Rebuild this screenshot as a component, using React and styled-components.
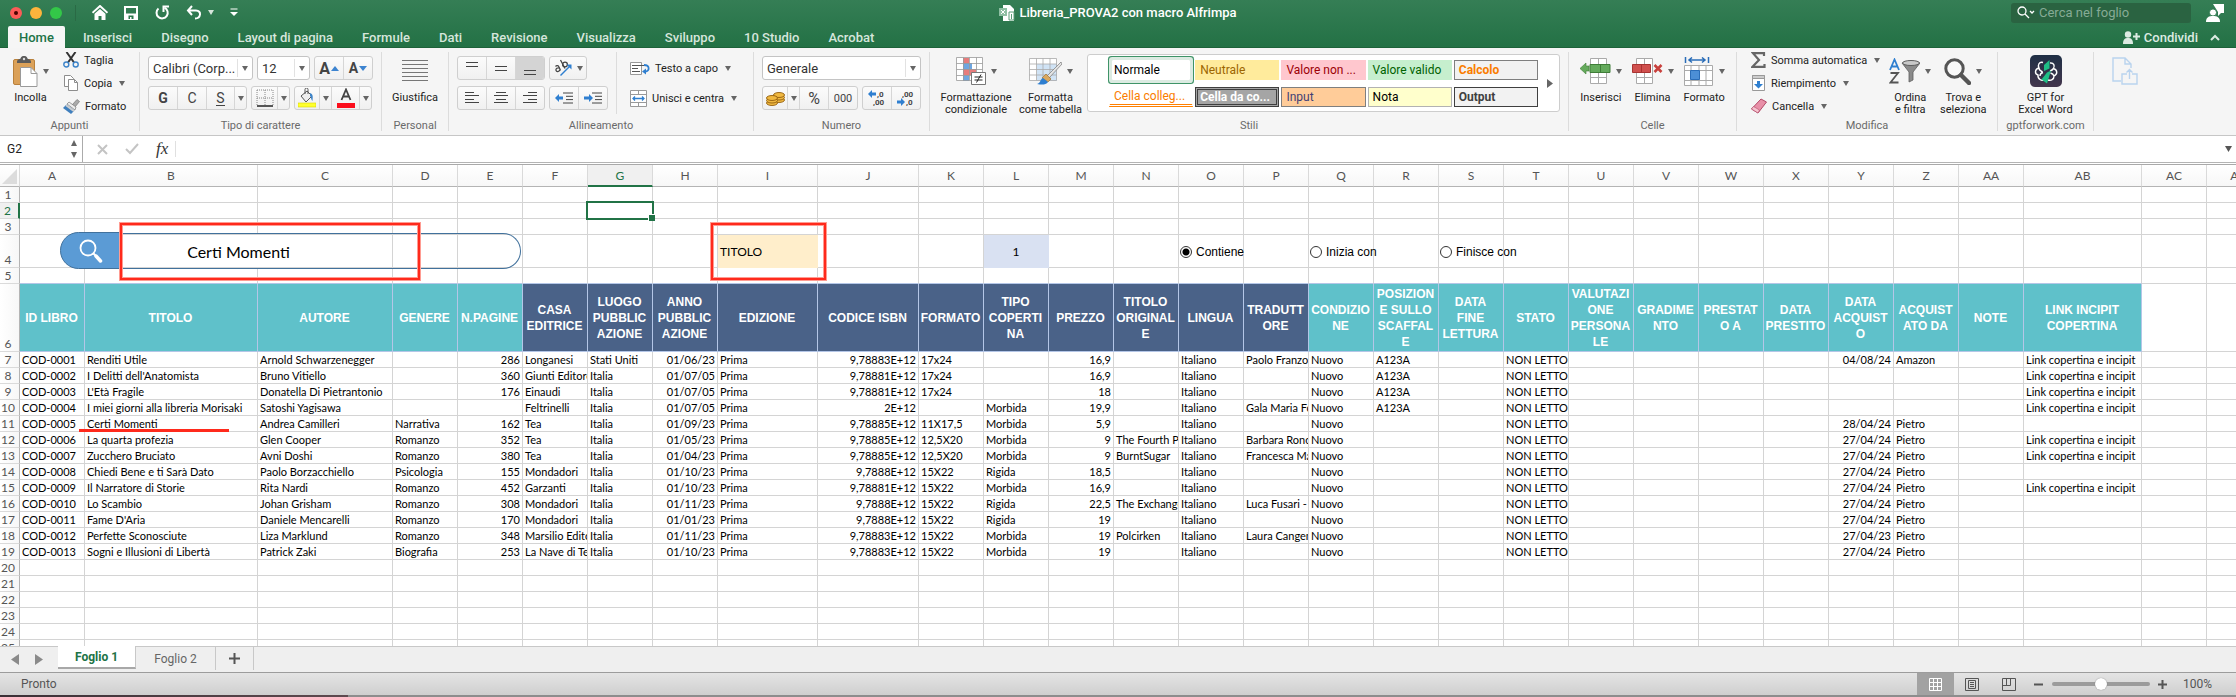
import React from "react";
import styled, { createGlobalStyle, css } from "styled-components";

const GlobalStyle = createGlobalStyle`
  * { box-sizing: border-box; }
  html, body, #root { height: 100%; }
  body { margin: 0; overflow: hidden; font-family: Roboto, "Liberation Sans", sans-serif; font-size: 11px; color: #222; }
  button, input, select { font: inherit; color: inherit; }
  button { border: 0; background: none; padding: 0; margin: 0; }
  svg { display: block; flex: none; }
`;

/* ---------- frame ---------- */
const Window = styled.div`
  height: 100vh;
  display: flex;
  flex-direction: column;
  background: #fff;
`;
const Header = styled.header`
  flex: none;
  height: 48px;
  background: linear-gradient(#357e55, #237145);
  border-bottom: 1px solid #1d6239;
`;
const TitleBar = styled.div`
  height: 25px;
  display: grid;
  grid-template-columns: 1fr auto 1fr;
  align-items: center;
`;
const QuickBar = styled.div`
  display: flex;
  align-items: center;
  padding-left: 10px;
  color: #fff;
`;
const Light = styled.button`
  width: 12px;
  height: 12px;
  margin-right: 8px;
  border-radius: 50%;
  background: ${(p) => p.$color};
  display: grid;
  place-items: center;
  &::after {
    content: "";
    width: 4px;
    height: 4px;
    border-radius: 50%;
    background: ${(p) => (p.$dot ? "#4d0000" : "transparent")};
  }
`;
const LightDivider = styled.span`
  width: 1px;
  height: 16px;
  margin: 0 16px 0 5px;
  background: #2a6a45;
`;
const QuickButton = styled.button`
  display: flex;
  align-items: center;
  gap: 6px;
  margin-right: 16px;
`;
const DocTitle = styled.h1`
  display: flex;
  align-items: center;
  gap: 3px;
  margin: 0;
  color: #fff;
  font-size: 13px;
  font-weight: 500;
`;
const TitleRight = styled.div`
  display: flex;
  justify-content: flex-end;
  align-items: center;
  gap: 15px;
  padding-right: 12px;
`;
const SearchField = styled.label`
  display: flex;
  align-items: center;
  gap: 4px;
  width: 180px;
  height: 20px;
  padding-left: 6px;
  border-radius: 3px;
  background: #2a6341;
  input {
    width: 140px;
    padding: 0;
    border: 0;
    outline: 0;
    background: none;
    color: #fff;
    font-size: 13px;
  }
  input::placeholder { color: #86ab95; opacity: 1; }
`;
const TabBar = styled.nav`
  display: flex;
  height: 22px;
  margin-top: 1px;
  padding-left: 8px;
  gap: 7px;
`;
const Tab = styled.button`
  height: 22px;
  padding: 0 11px;
  border-radius: 2px 2px 0 0;
  font-size: 13px;
  font-weight: 500;
  color: ${(p) => (p.$active ? "#217346" : "#d6e6dc")};
  background: ${(p) => (p.$active ? "#f6f6f6" : "transparent")};
`;
const Share = styled.div`
  margin-left: auto;
  display: flex;
  align-items: center;
  gap: 12px;
  padding-right: 16px;
`;
const ShareButton = styled.button`
  display: flex;
  align-items: center;
  gap: 4px;
  color: #dcebe2;
  font-size: 13px;
  font-weight: 500;
`;

/* ---------- ribbon ---------- */
const Ribbon = styled.section`
  flex: none;
  display: flex;
  height: 88px;
  padding: 4px 0;
  background: #f5f5f5;
  border-bottom: 1px solid #c6c6c6;
`;
const Group = styled.div`
  flex: ${(p) => (p.$grow ? "1 0 auto" : "none")};
  width: ${(p) => (p.$w ? p.$w + "px" : "auto")};
  display: flex;
  flex-direction: column;
  border-right: ${(p) => (p.$last ? 0 : 1)}px solid #dcdcdc;
`;
const GroupBody = styled.div`
  flex: 1;
  display: flex;
  align-items: flex-start;
  gap: ${(p) => p.$gap || 0}px;
  padding: 0 8px 0 ${(p) => p.$left ?? 8}px;
`;
const GroupLabel = styled.div`
  height: 13px;
  line-height: 15px;
  text-align: center;
  color: #6a6a6a;
`;
const Large = styled.button`
  width: ${(p) => p.$w}px;
  padding-top: 3px;
  display: flex;
  flex-direction: column;
  align-items: center;
  gap: 5px;
  line-height: 12px;
  white-space: pre;
`;
const LargeIcon = styled.span`
  height: 32px;
  display: flex;
  align-items: center;
  gap: 5px;
`;
const SmallColumn = styled.div`
  display: flex;
  flex-direction: column;
  gap: 7px;
`;
const Small = styled.button`
  display: flex;
  align-items: center;
  height: 16px;
  gap: 5px;
  white-space: nowrap;
  span { display: flex; align-items: center; gap: 7px; }
`;
const ControlRows = styled.div`
  display: flex;
  flex-direction: column;
  gap: 6px;
  padding-top: 4px;
`;
const ControlRow = styled.div`
  display: flex;
  height: 24px;
  gap: 4px;
`;
const Segments = styled.div`
  display: flex;
  border: 1px solid #cfcfcf;
  border-radius: 3px;
  background: linear-gradient(#fbfbfb, #f0f0f0);
  overflow: hidden;
`;
const Segment = styled.button`
  width: ${(p) => p.$w}px;
  display: flex;
  align-items: center;
  justify-content: center;
  gap: ${(p) => (p.$tight ? 1 : 5)}px;
  color: #444;
  font-size: ${(p) => p.$size || 14}px;
  font-weight: ${(p) => (p.$bold ? 700 : 400)};
  background: ${(p) => (p.$on ? "#d4d4d4" : "transparent")};
  border-left: ${(p) => (p.$first ? 0 : 1)}px solid #d6d6d6;
`;
const Underlined = styled.span`
  line-height: 14px;
  border-bottom: 1px solid #444;
`;
const Combo = styled.div`
  display: flex;
  width: ${(p) => p.$w}px;
  height: 24px;
  align-items: center;
  background: #fff;
  border: 1px solid #c4c4c4;
  border-radius: 3px;
  select {
    flex: 1;
    min-width: 0;
    height: 22px;
    padding: 0 0 0 4px;
    border: 0;
    outline: 0;
    appearance: none;
    background: none;
    font-size: 13px;
    color: #333;
  }
  svg { margin: 0 4px; }
`;
const ComboLine = styled.span`
  width: 1px;
  height: 18px;
  background: #e2e2e2;
`;
const InnerLine = styled.span`
  width: 1px;
  height: 62px;
  margin: 0 13px 0 8px;
  background: #dcdcdc;
`;
const WrapColumn = styled.div`
  display: flex;
  flex-direction: column;
  gap: 14px;
  padding-top: 8px;
`;
const Gallery = styled.div`
  flex: 1;
  height: 58px;
  margin-top: 2px;
  display: flex;
  align-items: center;
  justify-content: space-between;
  padding: 0 6px 0 21px;
  border: 1px solid #cdcdcd;
  border-radius: 3px;
  background: #fff;
`;
const StyleGrid = styled.div`
  flex: 1;
  display: grid;
  grid-template-columns: repeat(5, 1fr);
  gap: 7px 2px;
  margin-right: 9px;
`;
const StyleChip = styled.button`
  height: 20px;
  padding-left: 4px;
  text-align: left;
  font-size: 12px;
  white-space: nowrap;
  color: ${(p) => p.$fg};
  background: ${(p) => p.$bg};
  border: 1px solid ${(p) => p.$line || p.$bg};
  font-weight: ${(p) => (p.$bold ? 700 : 400)};
  ${(p) => p.$kind === "selected" && css`
    box-shadow: 0 0 0 3px #dcebe2, 0 0 0 4px #3f9468;
    border-radius: 1px;
    margin: 0 3px;
    padding-left: 1px;
  `}
  ${(p) => p.$kind === "double" && css`
    border: 3px double #3f3f3f;
    padding-left: 2px;
    line-height: 14px;
  `}
  ${(p) => p.$kind === "linked" && css`
    border-bottom: 3px double #ff8001;
  `}
`;

/* ---------- formula bar ---------- */
const FormulaBar = styled.div`
  flex: none;
  display: flex;
  align-items: center;
  height: 29px;
  padding-bottom: 2px;
  border-bottom: 1px solid #a9a9a9;
  background: linear-gradient(#fff 26px, #b4b4b4 26px, #b4b4b4 27px, #fff 27px);
`;
const NameBox = styled.div`
  width: 83px;
  height: 26px;
  display: flex;
  align-items: center;
  justify-content: space-between;
  padding-right: 4px;
  border-right: 1px solid #ababab;
  input {
    width: 60px;
    padding: 0 0 0 7px;
    border: 0;
    outline: 0;
    background: none;
    font-size: 12px;
  }
`;
const BarTools = styled.div`
  display: flex;
  align-items: center;
  gap: 17px;
  padding: 0 7px 0 14px;
  border-right: 1px solid #e0e0e0;
`;
const FxButton = styled.button`
  font: italic 17px/16px "Liberation Serif", serif;
  color: #333;
`;
const FormulaInput = styled.input`
  flex: 1;
  border: 0;
  outline: 0;
  background: none;
`;
const BarCaret = styled.button`
  padding-right: 4px;
`;

/* ---------- sheet ---------- */
const Sheet = styled.main`
  position: relative;
  flex: 1;
  min-height: 0;
  overflow: hidden;
  background: #fff;
`;
const Grid = styled.table`
  table-layout: fixed;
  width: 2272px;
  border-collapse: separate;
  border-spacing: 0;
  font-family: Lato, "Liberation Sans", sans-serif;
  font-size: 11px;
  line-height: 15px;
`;
const Col = styled.col`
  width: ${(p) => p.$w}px;
`;
const ColHead = styled.th`
  height: 22px;
  padding: 0;
  font-weight: 400;
  font-size: 12px;
  color: ${(p) => (p.$on ? "#217346" : "#555")};
  background: ${(p) => (p.$on ? "#f0f0f0" : "linear-gradient(#fff, #f7f7f7)")};
  border-right: 1px solid #dadada;
  border-bottom: ${(p) => (p.$on ? "2px solid #217346" : "1px solid #b4b4b4")};
`;
const RowHead = styled.th`
  padding: 0 3px 0 0;
  vertical-align: bottom;
  font-weight: 400;
  font-size: 12px;
  color: ${(p) => (p.$on ? "#217346" : "#555")};
  background: ${(p) => (p.$on ? "#f0f0f0" : "linear-gradient(90deg, #fff, #f7f7f7)")};
  border-right: ${(p) => (p.$on ? "2px solid #217346" : "1px solid #b4b4b4")};
  border-bottom: 1px solid #dadada;
`;
const Row = styled.tr`
  height: ${(p) => p.$h || 16}px;
`;
const Cell = styled.td`
  height: ${(p) => p.$h || 16}px;
  padding: 0 2px;
  overflow: hidden;
  white-space: nowrap;
  color: #000;
  text-align: ${(p) => p.$align || "left"};
  font-size: ${(p) => p.$size || 11}px;
  background: ${(p) => p.$bg || "transparent"};
  border-right: 1px solid ${(p) => p.$bg || "#d4d4d4"};
  border-bottom: 1px solid ${(p) => (p.$under ? "#b4c6e7" : p.$bg || "#d4d4d4")};
`;
const TitleCell = styled.th`
  padding: 0 2px 0 1px;
  font: 700 12px/16px "Liberation Sans", Arial, sans-serif;
  overflow-wrap: anywhere;
  color: #fff;
  background: ${(p) => (p.$dark ? "#4a6288" : "#5fc1ca")};
  border-right: 1px solid #b4c6e7;
  border-bottom: 1px solid #b4c6e7;
`;
const OptionCell = styled(Cell)`
  overflow: visible;
`;
const Option = styled.label`
  display: flex;
  align-items: center;
  gap: 4px;
  width: 90px;
  padding-top: 2px;
  margin-left: -1px;
  font: 12px/14px "Liberation Sans", Arial, sans-serif;
  input {
    appearance: none;
    flex: none;
    width: 12px;
    height: 12px;
    margin: 0;
    border: 1px solid #333;
    border-radius: 50%;
    background: #fff;
  }
  input:checked {
    background: radial-gradient(#000 3px, #fff 4px);
  }
`;
const SelectedCell = styled(Cell)`
  position: relative;
  overflow: visible;
  &::before {
    content: "";
    position: absolute;
    inset: -2px;
    border: 2px solid #217346;
  }
  &::after {
    content: "";
    position: absolute;
    right: -3px;
    bottom: -3px;
    width: 6px;
    height: 6px;
    background: #217346;
    border: solid #fff;
    border-width: 1px 0 0 1px;
  }
`;
const SearchShape = styled.div`
  position: absolute;
  left: 60px;
  top: 67px;
  width: 461px;
  height: 37px;
  display: flex;
  align-items: center;
`;
const SearchCap = styled.div`
  width: 61px;
  height: 37px;
  padding: 6px 0 0 18px;
  border: 1px solid #41719c;
  border-radius: 19px 0 0 19px;
  background: #5b9bd5;
`;
const SearchTrack = styled.div`
  flex: 1;
  height: 36px;
  border: 1px solid #41719c;
  border-left: 0;
  border-radius: 0 18px 18px 0;
`;
const RedFrame = styled.div`
  position: absolute;
  top: 58px;
  left: ${(p) => p.$x}px;
  width: ${(p) => p.$w}px;
  height: 57px;
  border: 2px solid #ff2a1c;
  box-shadow: 0 0 0 1px #ff9c92, inset 0 0 0 1px #ff9c92;
`;
const RedLine = styled.div`
  position: absolute;
  left: 79px;
  top: 264px;
  width: 150px;
  height: 3px;
  background: #ff2a1c;
`;

/* ---------- bottom bars ---------- */
const SheetTabs = styled.nav`
  flex: none;
  display: flex;
  height: 26px;
  background: #efefef;
  border-top: 1px solid #c8c8c8;
`;
const TabArrows = styled.div`
  display: flex;
  gap: 16px;
  align-items: center;
  width: 58px;
  padding-left: 11px;
`;
const SheetTab = styled.button`
  width: ${(p) => p.$w}px;
  height: 23px;
  margin-top: ${(p) => (p.$active ? -1 : 0)}px;
  display: grid;
  place-items: center;
  font-size: 12px;
  font-weight: ${(p) => (p.$active ? 700 : 400)};
  color: ${(p) => (p.$active ? "#217346" : "#666")};
  background: ${(p) => (p.$active ? "#fff" : "transparent")};
  border-right: 1px solid #c8c8c8;
  border-bottom: ${(p) => (p.$active ? "2px solid #a8a8a8" : "0")};
`;
const StatusBar = styled.footer`
  flex: none;
  display: flex;
  align-items: center;
  justify-content: space-between;
  height: 23px;
  padding: 0 24px 0 21px;
  border-top: 1px solid #9c9c9c;
  background: linear-gradient(#e4e4e4, #cfcfcf);
  color: #555;
  font-size: 12px;
`;
const StatusTools = styled.div`
  display: flex;
  align-items: center;
  height: 22px;
`;
const ViewButton = styled.button`
  width: 37px;
  height: 22px;
  display: grid;
  place-items: center;
  background: ${(p) => (p.$on ? "#a2a2a2" : "transparent")};
`;
const ZoomButton = styled.button`
  width: 22px;
  display: grid;
  place-items: center;
`;
const ZoomSlider = styled.input`
  appearance: none;
  width: 98px;
  height: 4px;
  margin: 0 2px;
  border-radius: 2px;
  background: #9b9b9b;
  &::-webkit-slider-thumb {
    appearance: none;
    width: 12px;
    height: 12px;
    border-radius: 50%;
    background: #fff;
    box-shadow: 0 0 1px #666;
  }
`;
const ZoomValue = styled.span`
  margin-left: 9px;
`;
const DesktopEdge = styled.div`
  flex: none;
  height: 2px;
  background: linear-gradient(90deg, #3b3036, #5e4a4f 348px, #8d8d8d 348px);
`;

/* ---------- icons ---------- */
const Svg = ({ w, h, children, ...rest }) => (
  <svg width={w} height={h} viewBox={`0 0 ${w} ${h}`} fill="none" aria-hidden="true" {...rest}>{children}</svg>
);
const Caret = ({ color = "#666" }) => <Svg w={6} h={5}><path d="M0 0h6L3 5z" fill={color} /></Svg>;
const Arrow = ({ dir, color = "#3d84d0" }) => (
  <Svg w={8} h={5}><path d={dir === "up" ? "M0 5h8L4 0z" : "M0 0h8L4 5z"} fill={color} /></Svg>
);

const HomeIcon = () => (
  <Svg w={16} h={15}><path d="M0.5 7.8 8 1l7.5 6.8" stroke="#fff" strokeWidth="2" /><path d="M2.5 8.8 8 4l5.5 4.8V15H9.5v-4h-3v4h-4z" fill="#fff" /></Svg>
);
const SaveIcon = () => (
  <Svg w={14} h={14}><path d="M1 1h12v12H1z" stroke="#fff" strokeWidth="2" /><path d="M2 7.5h10v5H2z" fill="#fff" /><path d="M4.5 9.500h5V13h-2v-2h-1.500v2h-1.500z" fill="#2c784d" /></Svg>
);
const RedoIcon = () => (
  <Svg w={16} h={15}><path d="M4.5 3.5a5.6 5.6 0 1 0 6-.8" stroke="#fff" strokeWidth="2" /><path d="M9.5 7V1.5H15" stroke="#fff" strokeWidth="2" /></Svg>
);
const UndoIcon = () => (
  <Svg w={16} h={15}><path d="M6 1 2 5.5 6 10M2 5.5h8c6 0 5 8-1 8" stroke="#fff" strokeWidth="2" /></Svg>
);
const MoreIcon = () => (
  <Svg w={8} h={9}><path d="M0.5 1h7" stroke="#bcd5c6" strokeWidth="1.5" /><path d="M0 4h8L4 8z" fill="#fff" /></Svg>
);
const DocIcon = () => (
  <Svg w={17} h={16}><path d="M4 0h7l4 4v12H4z" fill="#fff" /><path d="M0 3h8v8H0z" fill="#8fbfa3" /><path d="m2 5 4 4m0-4-4 4" stroke="#fff" /><path d="M10 7h5v8h-5z" stroke="#5a9c76" /><path d="M12.5 9v5" stroke="#5a9c76" /></Svg>
);
const SearchIcon = () => (
  <Svg w={18} h={14}><circle cx="5" cy="5" r="4" stroke="#fff" strokeWidth="1.3" /><path d="m8 8 4 4M13 5l2 2 2-2" stroke="#fff" strokeWidth="1.3" /></Svg>
);
const UserIcon = () => (
  <Svg w={18} h={18}><path d="M7 0h11v9h-3l-3 3V8z" fill="#fff" /><circle cx="7" cy="8.5" r="3.6" fill="#fff" stroke="#2f7a50" /><path d="M0 18c0-5 3-6 7-6s7 1 7 6z" fill="#fff" /></Svg>
);
const ShareUserIcon = () => (
  <Svg w={17} h={13}><circle cx="5" cy="3.5" r="3.2" fill="#dcebe2" /><path d="M0 13c0-5 2-6 5-6s5 1 5 6z" fill="#dcebe2" /><path d="M13.5 2v7M10 5.5h7" stroke="#dcebe2" strokeWidth="2" /></Svg>
);
const PasteIcon = () => (
  <Svg w={25} h={31}>
    <rect x="0.5" y="3.5" width="21" height="25" rx="1.5" fill="#dba159" stroke="#b9813c" />
    <path d="M4 6c0-3 3-2.500 3.500-3.500C8 .5 9.500 0 11 0s3 .5 3.500 2.500C15 3.500 18 3 18 6v1H4z" fill="#5b5b5b" /><circle cx="11" cy="3" r="1.2" fill="#ddd" />
    <path d="M7.500 11.500h10.500l6 6V30.500H7.500z" fill="#fff" stroke="#9a9a9a" /><path d="M18 11.500v6h6" stroke="#9a9a9a" />
  </Svg>
);
const CutIcon = () => (
  <Svg w={16} h={16}><path d="M3.500 0 11 10.500M12.500 0 5 10.500" stroke="#333" strokeWidth="2" /><circle cx="3.3" cy="12.500" r="2.500" stroke="#3d84c9" strokeWidth="1.4" /><circle cx="12.7" cy="12.500" r="2.500" stroke="#3d84c9" strokeWidth="1.4" /></Svg>
);
const CopyIcon = () => (
  <Svg w={16} h={16}><path d="M1.500.5h6l3 3v8h-9z" fill="#fff" stroke="#8d8d8d" /><path d="M5.500 4.500h6l3 3v8h-9z" fill="#fff" stroke="#8d8d8d" /><path d="M11.500 4.500v3h3" stroke="#8d8d8d" /></Svg>
);
const BrushIcon = () => (
  <Svg w={17} h={15}><path d="m9 6 5-5.500 2.500 2L12 8z" fill="#aaa" stroke="#777" strokeWidth=".7" /><path d="m4 5 8 6 1-3-7-5z" fill="#ececec" stroke="#777" strokeWidth=".7" /><path d="m3.500 5.500 8 6L8 15 0 9z" fill="#3f7fbd" /><path d="m3.500 5.500 8 6-1 1.500-8-6z" fill="#cfcfcf" /></Svg>
);
const BordersIcon = () => (
  <Svg w={18} h={18}><path d="M1 1h16M1 9h16M1 1v16M9 1v16M17 1v16" stroke="#888" strokeDasharray="1 1" /><path d="M1 17h16" stroke="#222" strokeWidth="1.5" /></Svg>
);
const FillIcon = () => (
  <Svg w={18} h={20}><path d="m3 8 6-5 5 5-6 6z" fill="#eee" stroke="#555" /><path d="M7 6V1.500a1.500 1.500 0 0 1 3 0V6" stroke="#555" /><path d="M12 5c3 1 3 3 2.500 8-2-2-1-4-2.500-5z" fill="#3d84c9" /><path d="M0 15h18v4H0z" fill="#ffff2e" stroke="#d8d800" strokeWidth=".6" /></Svg>
);
const FontColorIcon = () => (
  <Svg w={18} h={20}><path d="M4.500 12 9 1.500 13.500 12M6 8.500h6" stroke="#444" strokeWidth="1.8" /><path d="M0 15h18v5H0z" fill="#fb0d1b" /></Svg>
);
const Lines = ({ w, h, rows, color = "#444" }) => (
  <Svg w={w} h={h}>{rows.map(([x, y, len], i) => <path key={i} d={`M${x} ${y + 0.5}h${len}`} stroke={color} />)}</Svg>
);
const JustifyIcon = () => <Lines w={26} h={22} color="#777" rows={[0, 4, 8, 12, 16, 20].map((y) => [0, y, 26])} />;
const OrientIcon = () => (
  <Svg w={18} h={18}>
    <g stroke="#444" strokeWidth="1.3">
      <path d="M1.500 7.500c1-1.500 3-1 3.500.5l1.500 3.500M5.500 9c-2-.5-4 .5-3.500 2.300s3 1.700 4-.5" />
      <path d="m6.500 1 4.500 8.500" /><circle cx="11" cy="5.500" r="2.400" />
    </g>
    <path d="m6.500 16.500 9.500-9.500" stroke="#2f7fd0" strokeWidth="1.500" /><path d="M17.500 5.500v5l-5-5z" fill="#2f7fd0" />
  </Svg>
);
const IndentIcon = ({ out }) => (
  <Svg w={18} h={12}><path d="M8 1h10M11 4.300h7M11 7.600h7M8 11h10" stroke="#444" /><path d={out ? "M0 6l4-4v2.500h4v3H4V10z" : "M9 6 5 2v2.500H0v3h5V10z"} fill="#2f7fd0" /></Svg>
);
const WrapIcon = () => (
  <Svg w={20} h={15}><path d="M.5 1.500h11v12H.5z" fill="#fff" stroke="#999" /><path d="M2 4.500h12M2 7.500h6M2 10.500h8" stroke="#555" /><path d="M14 4c6 0 6 6 1 6.500" stroke="#2f7fd0" strokeWidth="1.8" /><path d="m16 7.500-4 3 4 3z" fill="#2f7fd0" /></Svg>
);
const MergeIcon = () => (
  <Svg w={17} h={17}><path d="M.5.5h16v16H.5zM.5 4.500h16M.5 12.500h16M8.500.5v4M8.500 12.500v4" fill="#fff" stroke="#999" /><path d="M3 8.500h11M5 6.500 3 8.500l2 2M12 6.500l2 2-2 2" stroke="#2f7fd0" strokeWidth="1.3" /></Svg>
);
const CoinsIcon = () => (
  <Svg w={19} h={15}>
    {[[13, 9], [13, 6.5], [13, 4], [6, 12], [6, 9.5], [6, 7]].map(([x, y], i) => <ellipse key={i} cx={x} cy={y} rx="5.5" ry="2.5" fill="#f0b840" stroke="#94600f" strokeWidth=".9" />)}
  </Svg>
);
const DecimalIcon = ({ more }) => (
  <Svg w={19} h={16} fontFamily="Roboto" fontSize="8" fontWeight="700">
    <path d={more ? "M0 4l4-4v2.500h4v3H4V8z" : "M8 12 4 8v2.500H0v3h4V16z"} fill="#2f7fd0" />
    <text x={more ? 9 : 5} y="7" fill="#444">{more ? ",0" : ",00"}</text>
    <text x={more ? 5 : 9} y="15" fill="#444">{more ? ",00" : ",0"}</text>
  </Svg>
);
const CondIcon = () => (
  <Svg w={30} h={28}><path d="M.5.5h26v23H.5z" fill="#fff" /><path d="M7 1h6v5H7zM7 12h13v6H7z" fill="#e67c7c" /><path d="M7 6h9v6H7zM7 18h6v6H7z" fill="#6ea6e0" /><path d="M.5.5h26v23H.5zM.5 6.500h26M.5 12.500h26M.5 18.500h26M7.500.5v23M13.500.5v23M20.500.5v23" stroke="#999" strokeWidth=".8" /><path d="M15.500 15.500h14v12h-14z" fill="#fff" stroke="#777" /><path d="M18.500 20h8M18.500 23h8M25 17.500l-4.500 8" stroke="#222" /></Svg>
);
const TableIcon = () => (
  <Svg w={33} h={28}><path d="M.5 1.500h27v22H.5z" fill="#fff" /><path d="M8 7h20v17H8z" fill="#d0e3f5" /><path d="M.5 1.500h27v22H.5zM.5 7h27M.5 12.500h27M.5 18h27M7.500 1.500v22M14 1.500v22M21 1.500v22" stroke="#aaa" strokeWidth=".8" /><path d="M32 5 18 19l2 2L33 7z" fill="#e4e4e4" stroke="#777" strokeWidth=".7" /><path d="m17 17 5 5-3 3-6-4z" fill="#d9a860" stroke="#9a6b2a" strokeWidth=".6" /><path d="M8 27c4-1 3-5 6-6l5 4c-2 3-6 3-11 2z" fill="#2f7fd0" /></Svg>
);
const InsertIcon = () => (
  <Svg w={31} h={27}><path d="M10.500.5h16v25h-16zM18.500.5v25M10.500 19.500h16" fill="#fff" stroke="#aaa" /><path d="M10 6.500h20v8H10z" fill="#64aa5c" stroke="#3f7d38" /><path d="M20.500 7v7" stroke="#3f7d38" /><path d="M0 10.500 6 5v3h3v5H6v3z" fill="#64aa5c" stroke="#3f7d38" strokeWidth=".6" /></Svg>
);
const DeleteIcon = () => (
  <Svg w={31} h={27}><path d="M4.500.5h16v25h-16zM12.500.5v25M4.500 19.500h16" fill="#fff" stroke="#aaa" /><path d="M.5 6.500h18v8H.5z" fill="#d0504e" stroke="#a83432" /><path d="M9.500 7v7" stroke="#a83432" /><path d="m22.500 7 7 7m0-7-7 7" stroke="#c8403c" strokeWidth="2.6" /></Svg>
);
const FormatIcon = () => (
  <Svg w={30} h={29}><path d="M1.500 0v6M24.500 0v6M5 3h16M8 .5 5 3l3 2.500M18 .5 21 3l-3 2.500" stroke="#2a6db8" strokeWidth="1.5" /><path d="M.5 8.500h28v20H.5zM.5 13.500h28M.5 23.500h28M7 8.500v20M15 8.500v20M22 8.500v20" fill="#fff" stroke="#aaa" /><path d="M6.500 13.500h9v9h-9z" fill="#4c8fd6" stroke="#2a6db8" /></Svg>
);
const SigmaIcon = () => (
  <Svg w={15} h={16}><path d="M13 4V1.200H2L8 8l-6.500 6.800H13.500V12" stroke="#666" strokeWidth="2.2" /></Svg>
);
const FillDownIcon = () => (
  <Svg w={15} h={16}><path d="M1.500.5h12v15h-12z" fill="#fff" stroke="#999" /><path d="M1.500.5h12v3h-12z" fill="#ccc" stroke="#999" /><path d="M6 6h3v3h3l-4.500 4.500L3 9h3z" fill="#2f7fd0" /></Svg>
);
const EraserIcon = () => (
  <Svg w={16} h={16}><path d="M10 1 15.500 4 7 15 .5 11z" fill="#e890a8" stroke="#b24a68" /><path d="m.5 11 2-2.500L8.500 12 7 15z" fill="#f6c4d0" stroke="#b24a68" strokeWidth=".6" /></Svg>
);
const SortIcon = () => (
  <Svg w={31} h={26}><path d="m1 12 4.500-10.500L10 12M2.500 8.500h6" stroke="#2f7fd0" strokeWidth="1.8" /><path d="M1.500 15h7.500L1.500 24.500H9.500" stroke="#555" strokeWidth="1.8" /><path d="m13 5 7 9v10l4-2v-8l7-9z" fill="#8a8a8a" stroke="#5e5e5e" strokeWidth=".8" /><ellipse cx="22" cy="5" rx="8.500" ry="2.500" fill="#c8c8c8" stroke="#5e5e5e" /></Svg>
);
const FindIcon = () => (
  <Svg w={27} h={27}><circle cx="10.5" cy="10.5" r="8.7" stroke="#555" strokeWidth="3" fill="#f9f9f9" /><path d="m17 17 8 8" stroke="#555" strokeWidth="4.5" strokeLinecap="round" /></Svg>
);
const GptIcon = () => (
  <Svg w={32} h={32}>
    <defs><linearGradient id="gpt" x2="0" y2="1"><stop stopColor="#1f2f45" /><stop offset="1" stopColor="#43364d" /></linearGradient></defs>
    <rect width="32" height="32" rx="5" fill="url(#gpt)" />
    <path d="M13 7.500C9 6.500 7.500 10 9 13c-4.500 1-4.500 6-1 7-.5 4 3.500 6.500 7 4.500M20 8c4-.5 5 3 3.500 5.500 4.500 1.500 4 6 .5 7.500 0 3.500-3 5-6 4M9 13c0 2 1.500 3 3.500 4M10 21c0-2 1-3 3-3.500M23.500 13.500c-1 1.500-2 2-3.500 2.500M24 21c-.5-1.500-1.500-2.500-3.500-3" stroke="#fff" strokeWidth="1.4" />
    <path d="m14 10 5.500-5v8.500L14 16zM17 17.500l4-2-4 13-5.500-4z" fill="#1fbf86" />
  </Svg>
);
const SendIcon = () => (
  <Svg w={26} h={28} stroke="#b9d3ee" strokeWidth="1.4"><path d="M9 24H1V1h12l6 6v4M13 1v6h6M15 17h-5v10h15V17h-5M17.500 22V13M14.500 15.500l3-3 3 3" /></Svg>
);

/* ---------- data ---------- */
const widths = [20, 65, 173, 135, 65, 65, 65, 65, 65, 100, 101, 65, 65, 65, 65, 65, 65, 65, 65, 65, 65, 65, 65, 65, 65, 65, 65, 65, 118, 65, 65];
const letters = "A B C D E F G H I J K L M N O P Q R S T U V W X Y Z AA AB AC AD".split(" ");
const titles = ["ID LIBRO", "TITOLO", "AUTORE", "GENERE", "N.PAGINE", "CASA EDITRICE", "LUOGO PUBBLICAZIONE", "ANNO PUBBLICAZIONE", "EDIZIONE", "CODICE ISBN", "FORMATO", "TIPO COPERTINA", "PREZZO", "TITOLO ORIGINALE", "LINGUA", "TRADUTTORE", "CONDIZIONE", "POSIZIONE SULLO SCAFFALE", "DATA FINE LETTURA", "STATO", "VALUTAZIONE PERSONALE", "GRADIMENTO", "PRESTATO A", "DATA PRESTITO", "DATA ACQUISTO", "ACQUISTATO DA", "NOTE", "LINK INCIPIT COPERTINA"];
const L = "Link copertina e incipit";
const books = [
  ["COD-0001", "Renditi Utile", "Arnold Schwarzenegger", "", "286", "Longanesi", "Stati Uniti", "01/06/23", "9,78883E+12", "17x24", "", "16,9", "", "Paolo Franzoni", "A123A", "04/08/24", "Amazon", L],
  ["COD-0002", "I Delitti dell'Anatomista", "Bruno Vitiello", "", "360", "Giunti Editore", "Italia", "01/07/05", "9,78881E+12", "17x24", "", "16,9", "", "", "A123A", "", "", L],
  ["COD-0003", "L'Età Fragile", "Donatella Di Pietrantonio", "", "176", "Einaudi", "Italia", "01/07/05", "9,78881E+12", "17x24", "", "18", "", "", "A123A", "", "", L],
  ["COD-0004", "I miei giorni alla libreria Morisaki", "Satoshi Yagisawa", "", "", "Feltrinelli", "Italia", "01/07/05", "2E+12", "", "Morbida", "19,9", "", "Gala Maria Follaco", "A123A", "", "", L],
  ["COD-0005", "Certi Momenti", "Andrea Camilleri", "Narrativa", "162", "Tea", "Italia", "01/09/23", "9,78885E+12", "11X17,5", "Morbida", "5,9", "", "", "", "28/04/24", "Pietro", ""],
  ["COD-0006", "La quarta profezia", "Glen Cooper", "Romanzo", "352", "Tea", "Italia", "01/05/23", "9,78885E+12", "12,5X20", "Morbida", "9", "The Fourth Prophecy", "Barbara Ronca", "", "27/04/24", "Pietro", L],
  ["COD-0007", "Zucchero Bruciato", "Avni Doshi", "Romanzo", "380", "Tea", "Italia", "01/04/23", "9,78885E+12", "12,5X20", "Morbida", "9", "BurntSugar", "Francesca Manfredi", "", "27/04/24", "Pietro", L],
  ["COD-0008", "Chiedi Bene e ti Sarà Dato", "Paolo Borzacchiello", "Psicologia", "155", "Mondadori", "Italia", "01/10/23", "9,7888E+12", "15X22", "Rigida", "18,5", "", "", "", "27/04/24", "Pietro", ""],
  ["COD-0009", "Il Narratore di Storie", "Rita Nardi", "Romanzo", "452", "Garzanti", "Italia", "01/10/23", "9,78881E+12", "15X22", "Morbida", "16,9", "", "", "", "27/04/24", "Pietro", L],
  ["COD-0010", "Lo Scambio", "Johan Grisham", "Romanzo", "308", "Mondadori", "Italia", "01/11/23", "9,7888E+12", "15X22", "Rigida", "22,5", "The Exchange", "Luca Fusari - Sara", "", "27/04/24", "Pietro", ""],
  ["COD-0011", "Fame D'Aria", "Daniele Mencarelli", "Romanzo", "170", "Mondadori", "Italia", "01/01/23", "9,7888E+12", "15X22", "Rigida", "19", "", "", "", "27/04/24", "Pietro", ""],
  ["COD-0012", "Perfette Sconosciute", "Liza Marklund", "Romanzo", "348", "Marsilio Editori", "Italia", "01/11/23", "9,78883E+12", "15X22", "Morbida", "19", "Polcirken", "Laura Cangemi", "", "27/04/23", "Pietro", ""],
  ["COD-0013", "Sogni e Illusioni di Libertà", "Patrick Zaki", "Biografia", "253", "La Nave di Teseo", "Italia", "01/10/23", "9,78883E+12", "15X22", "Morbida", "19", "", "", "", "27/04/24", "Pietro", ""],
];
const expand = ([id, title, author, genre, pages, house, place, year, isbn, size, cover, price, original, translator, shelf, bought, from, link]) =>
  [id, title, author, genre, pages, house, place, year, "Prima", isbn, size, cover, price, original, "Italiano", translator, "Nuovo", shelf, "", "NON LETTO", "", "", "", "", bought, from, "", link, "", ""];
const rightColumns = new Set([4, 7, 9, 12, 24]);
const styleChips = [
  { t: "Normale", $fg: "#000", $bg: "#fff", $kind: "selected" },
  { t: "Neutrale", $fg: "#9c6500", $bg: "#ffeb9c" },
  { t: "Valore non ...", $fg: "#9c0006", $bg: "#ffc7ce" },
  { t: "Valore valido", $fg: "#006100", $bg: "#c6efce" },
  { t: "Calcolo", $fg: "#fa7d00", $bg: "#f2f2f2", $line: "#7f7f7f", $bold: true },
  { t: "Cella colleg...", $fg: "#fa7d00", $bg: "#fff", $kind: "linked" },
  { t: "Cella da co...", $fg: "#fff", $bg: "#a5a5a5", $bold: true, $kind: "double" },
  { t: "Input", $fg: "#3f3f76", $bg: "#ffcc99", $line: "#7f7f7f" },
  { t: "Nota", $fg: "#000", $bg: "#ffffcc", $line: "#b2b2b2" },
  { t: "Output", $fg: "#3f3f3f", $bg: "#f2f2f2", $line: "#3f3f3f", $bold: true },
];

/* ---------- pieces ---------- */
const LargeButton = ({ icon, label, w, caret = true, name }) => (
  <Large $w={w} aria-label={name}><LargeIcon>{icon}{caret && <Caret />}</LargeIcon>{label}</Large>
);
const SmallButton = ({ icon, label, caret }) => (
  <Small>{icon}<span>{label}{caret && <Caret />}</span></Small>
);
const ComboBox = ({ w, label, value }) => (
  <Combo $w={w}><select aria-label={label}><option>{value}</option></select><ComboLine /><Caret /></Combo>
);
const EmptyCells = ({ n, from = 0, under }) =>
  Array.from({ length: n }, (_, i) => <Cell key={from + i} $under={under && from + i < 28} />);

function FontGroup() {
  return (
    <Group $w={242}>
      <GroupBody>
        <ControlRows>
          <ControlRow>
            <ComboBox w={105} label="Carattere" value="Calibri (Corp..." />
            <ComboBox w={53} label="Dimensione" value="12" />
            <Segments>
              <Segment $w={28} $first $tight $size={16} $bold>A<Arrow dir="up" /></Segment>
              <Segment $w={29} $tight $size={14} $bold>A<Arrow dir="down" /></Segment>
            </Segments>
          </ControlRow>
          <ControlRow>
            <Segments>
              <Segment $w={28} $first $bold>G</Segment>
              <Segment $w={29}>C</Segment>
              <Segment $w={28}><Underlined>S</Underlined></Segment>
              <Segment $w={12} aria-label="Sottolineatura"><Caret /></Segment>
            </Segments>
            <Segments>
              <Segment $w={25} $first aria-label="Bordi"><BordersIcon /></Segment>
              <Segment $w={12} aria-label="Altri bordi"><Caret /></Segment>
            </Segments>
            <Segments>
              <Segment $w={24} $first aria-label="Riempimento"><FillIcon /></Segment>
              <Segment $w={12} aria-label="Altri riempimenti"><Caret /></Segment>
              <Segment $w={28} aria-label="Colore carattere"><FontColorIcon /></Segment>
              <Segment $w={12} aria-label="Altri colori"><Caret /></Segment>
            </Segments>
          </ControlRow>
        </ControlRows>
      </GroupBody>
      <GroupLabel>Tipo di carattere</GroupLabel>
    </Group>
  );
}

function AlignGroup() {
  return (
    <Group $w={305}>
      <GroupBody>
        <ControlRows>
          <ControlRow>
            <Segments>
              <Segment $w={28} $first aria-label="In alto"><Lines w={12} h={14} rows={[[0, 1, 12], [0, 5, 12]]} /></Segment>
              <Segment $w={29} aria-label="Al centro"><Lines w={12} h={14} rows={[[0, 5, 12], [0, 9, 12]]} /></Segment>
              <Segment $w={29} $on aria-label="In basso"><Lines w={12} h={14} rows={[[0, 9, 12], [0, 13, 12]]} /></Segment>
            </Segments>
            <Segments>
              <Segment $w={36} $first aria-label="Orientamento"><OrientIcon /><Caret /></Segment>
            </Segments>
          </ControlRow>
          <ControlRow>
            <Segments>
              <Segment $w={28} $first aria-label="Sinistra"><Lines w={14} h={12} rows={[[0, 0, 9], [0, 3, 14], [0, 7, 9], [0, 10, 14]]} /></Segment>
              <Segment $w={29} aria-label="Centro"><Lines w={14} h={12} rows={[[2, 0, 10], [0, 3, 14], [2, 7, 10], [0, 10, 14]]} /></Segment>
              <Segment $w={29} aria-label="Destra"><Lines w={14} h={12} rows={[[5, 0, 9], [0, 3, 14], [5, 7, 9], [0, 10, 14]]} /></Segment>
            </Segments>
            <Segments>
              <Segment $w={28} $first aria-label="Riduci rientro"><IndentIcon out /></Segment>
              <Segment $w={29} aria-label="Aumenta rientro"><IndentIcon /></Segment>
            </Segments>
          </ControlRow>
        </ControlRows>
        <InnerLine />
        <WrapColumn>
          <SmallButton icon={<WrapIcon />} label="Testo a capo" caret />
          <SmallButton icon={<MergeIcon />} label="Unisci e centra" caret />
        </WrapColumn>
      </GroupBody>
      <GroupLabel>Allineamento</GroupLabel>
    </Group>
  );
}

function NumberGroup() {
  return (
    <Group $w={176}>
      <GroupBody>
        <ControlRows>
          <ControlRow><ComboBox w={159} label="Formato numero" value="Generale" /></ControlRow>
          <ControlRow>
            <Segments>
              <Segment $w={24} $first aria-label="Valuta"><CoinsIcon /></Segment>
              <Segment $w={12} aria-label="Altre valute"><Caret /></Segment>
              <Segment $w={29} $size={16}>%</Segment>
              <Segment $w={29} $size={11}>000</Segment>
            </Segments>
            <Segments>
              <Segment $w={28} $first aria-label="Aumenta decimali"><DecimalIcon more /></Segment>
              <Segment $w={29} aria-label="Diminuisci decimali"><DecimalIcon /></Segment>
            </Segments>
          </ControlRow>
        </ControlRows>
      </GroupBody>
      <GroupLabel>Numero</GroupLabel>
    </Group>
  );
}

function Spreadsheet() {
  return (
    <Sheet>
      <Grid>
        <colgroup>{widths.map((w, i) => <Col key={i} $w={w} />)}</colgroup>
        <thead>
          <tr>
            <ColHead><Svg w={18} h={20}><path d="M17 3v15H2z" fill="#dcdcdc" /></Svg></ColHead>
            {letters.map((l) => <ColHead key={l} $on={l === "G"}>{l}</ColHead>)}
          </tr>
        </thead>
        <tbody>
          <Row><RowHead>1</RowHead><EmptyCells n={30} /></Row>
          <Row><RowHead $on>2</RowHead><EmptyCells n={6} /><SelectedCell /><EmptyCells n={23} /></Row>
          <Row><RowHead>3</RowHead><EmptyCells n={30} /></Row>
          <Row $h={33}>
            <RowHead>4</RowHead>
            <Cell $h={33} />
            <Cell colSpan={2} $align="center" $size={16}>Certi Momenti</Cell>
            <EmptyCells n={5} />
            <Cell $bg="#ffeecb" $size={12}>TITOLO</Cell>
            <EmptyCells n={2} />
            <Cell $bg="#d9e1f2" $align="center" $size={12}>1</Cell>
            <EmptyCells n={2} />
            <OptionCell><Option><input type="radio" name="match" defaultChecked />Contiene</Option></OptionCell>
            <Cell />
            <OptionCell><Option><input type="radio" name="match" />Inizia con</Option></OptionCell>
            <Cell />
            <OptionCell><Option><input type="radio" name="match" />Finisce con</Option></OptionCell>
            <EmptyCells n={11} />
          </Row>
          <Row><RowHead>5</RowHead><EmptyCells n={30} under /></Row>
          <Row $h={68}>
            <RowHead>6</RowHead>
            {titles.map((t, i) => <TitleCell key={i} $dark={i > 4 && i < 16}>{t}</TitleCell>)}
            <EmptyCells n={2} />
          </Row>
          {books.map((b, r) => (
            <Row key={r}>
              <RowHead>{r + 7}</RowHead>
              {expand(b).map((v, i) => <Cell key={i} $align={rightColumns.has(i) ? "right" : "left"}>{v}</Cell>)}
            </Row>
          ))}
          {[20, 21, 22, 23, 24, 25].map((n) => <Row key={n}><RowHead>{n}</RowHead><EmptyCells n={30} /></Row>)}
        </tbody>
      </Grid>
      <SearchShape>
        <SearchCap><Svg w={24} h={25}><circle cx="9" cy="9" r="7.5" stroke="#fff" strokeWidth="1.8" /><path d="m14.500 14.500 2.500 2.500" stroke="#fff" strokeWidth="2" /><path d="m17 17 4.500 5" stroke="#fff" strokeWidth="3.500" strokeLinecap="round" /></Svg></SearchCap>
        <SearchTrack />
      </SearchShape>
      <RedFrame $x={120} $w={300} />
      <RedFrame $x={711} $w={115} />
      <RedLine />
    </Sheet>
  );
}

export default function App() {
  return (
    <Window>
      <GlobalStyle />
      <Header>
        <TitleBar>
          <QuickBar>
            <Light $color="#fc5b57" $dot aria-label="Chiudi" />
            <Light $color="#fdb43c" aria-label="Riduci" />
            <Light $color="#33c748" aria-label="Ingrandisci" />
            <LightDivider />
            <QuickButton aria-label="Home"><HomeIcon /></QuickButton>
            <QuickButton aria-label="Salva"><SaveIcon /></QuickButton>
            <QuickButton aria-label="Ripeti"><RedoIcon /></QuickButton>
            <QuickButton aria-label="Annulla"><UndoIcon /><Caret color="#d6e6dc" /></QuickButton>
            <QuickButton aria-label="Personalizza"><MoreIcon /></QuickButton>
          </QuickBar>
          <DocTitle><DocIcon />Libreria_PROVA2 con macro Alfrimpa</DocTitle>
          <TitleRight>
            <SearchField><SearchIcon /><input aria-label="Cerca nel foglio" placeholder="Cerca nel foglio" /></SearchField>
            <button aria-label="Account"><UserIcon /></button>
          </TitleRight>
        </TitleBar>
        <TabBar>
          {["Home", "Inserisci", "Disegno", "Layout di pagina", "Formule", "Dati", "Revisione", "Visualizza", "Sviluppo", "10 Studio", "Acrobat"].map((t) => <Tab key={t} $active={t === "Home"}>{t}</Tab>)}
          <Share>
            <ShareButton><ShareUserIcon />Condividi</ShareButton>
            <button aria-label="Riduci barra"><Svg w={10} h={7}><path d="m1 6 4-4 4 4" stroke="#dcebe2" strokeWidth="2" /></Svg></button>
          </Share>
        </TabBar>
      </Header>
      <Ribbon>
        <Group $w={140}>
          <GroupBody $gap={10}>
            <LargeButton w={45} icon={<PasteIcon />} label="Incolla" />
            <SmallColumn>
              <SmallButton icon={<CutIcon />} label="Taglia" />
              <SmallButton icon={<CopyIcon />} label="Copia" caret />
              <SmallButton icon={<BrushIcon />} label="Formato" />
            </SmallColumn>
          </GroupBody>
          <GroupLabel>Appunti</GroupLabel>
        </Group>
        <FontGroup />
        <Group $w={67}>
          <GroupBody>
            <LargeButton w={50} icon={<JustifyIcon />} label="Giustifica" caret={false} />
          </GroupBody>
          <GroupLabel>Personal</GroupLabel>
        </Group>
        <AlignGroup />
        <NumberGroup />
        <Group $grow>
          <GroupBody>
            <LargeButton w={76} icon={<CondIcon />} label={"Formattazione\ncondizionale"} />
            <LargeButton w={73} icon={<TableIcon />} label={"Formatta\ncome tabella"} />
            <Gallery>
              <StyleGrid>{styleChips.map(({ t, ...s }) => <StyleChip key={t} {...s}>{t}</StyleChip>)}</StyleGrid>
              <button aria-label="Altri stili"><Svg w={6} h={9}><path d="M0 0v9l6-4.500z" fill="#666" /></Svg></button>
            </Gallery>
          </GroupBody>
          <GroupLabel>Stili</GroupLabel>
        </Group>
        <Group $w={168}>
          <GroupBody $gap={4}>
            <LargeButton w={48} icon={<InsertIcon />} label="Inserisci" />
            <LargeButton w={48} icon={<DeleteIcon />} label="Elimina" />
            <LargeButton w={48} icon={<FormatIcon />} label="Formato" />
          </GroupBody>
          <GroupLabel>Celle</GroupLabel>
        </Group>
        <Group $w={261}>
          <GroupBody $left={14} $gap={6}>
            <SmallColumn>
              <SmallButton icon={<SigmaIcon />} label="Somma automatica" caret />
              <SmallButton icon={<FillDownIcon />} label="Riempimento" caret />
              <SmallButton icon={<EraserIcon />} label="Cancella" caret />
            </SmallColumn>
            <LargeButton w={48} icon={<SortIcon />} label={"Ordina\ne filtra"} />
            <LargeButton w={46} icon={<FindIcon />} label={"Trova e\nseleziona"} />
          </GroupBody>
          <GroupLabel>Modifica</GroupLabel>
        </Group>
        <Group $w={96}>
          <GroupBody>
            <LargeButton w={79} icon={<GptIcon />} label={"GPT for\nExcel Word"} caret={false} />
          </GroupBody>
          <GroupLabel>gptforwork.com</GroupLabel>
        </Group>
        <Group $w={142} $last>
          <GroupBody $left={12}>
            <LargeButton w={38} icon={<SendIcon />} caret={false} name="Invia" />
          </GroupBody>
        </Group>
      </Ribbon>
      <FormulaBar>
        <NameBox>
          <input aria-label="Casella nome" defaultValue="G2" />
          <Svg w={8} h={20}><path d="M1 7h6L4 1zM1 13h6l-3 6z" fill="#666" /></Svg>
        </NameBox>
        <BarTools>
          <button aria-label="Annulla"><Svg w={11} h={11}><path d="m1 1 9 9m0-9-9 9" stroke="#c4c4c4" strokeWidth="2" /></Svg></button>
          <button aria-label="Conferma"><Svg w={14} h={12}><path d="m1 6 4 4 8-9" stroke="#c4c4c4" strokeWidth="2" /></Svg></button>
          <FxButton>fx</FxButton>
        </BarTools>
        <FormulaInput aria-label="Barra della formula" />
        <BarCaret aria-label="Espandi"><Svg w={7} h={6}><path d="M0 0h7L3.500 6z" fill="#555" /></Svg></BarCaret>
      </FormulaBar>
      <Spreadsheet />
      <SheetTabs>
        <TabArrows>
          <button aria-label="Foglio precedente"><Svg w={8} h={11}><path d="M8 0v11L0 5.500z" fill="#8a8a8a" /></Svg></button>
          <button aria-label="Foglio successivo"><Svg w={8} h={11}><path d="M0 0v11l8-5.500z" fill="#8a8a8a" /></Svg></button>
        </TabArrows>
        <SheetTab $w={78} $active>Foglio 1</SheetTab>
        <SheetTab $w={80}>Foglio 2</SheetTab>
        <SheetTab $w={38} aria-label="Nuovo foglio"><Svg w={11} h={11}><path d="M5.500 0v11M0 5.500h11" stroke="#555" strokeWidth="2" /></Svg></SheetTab>
      </SheetTabs>
      <StatusBar>
        <span>Pronto</span>
        <StatusTools>
          <ViewButton $on aria-label="Normale"><Svg w={13} h={13}><path d="M.5.5h12v12H.5zM4.500.5v12M8.500.5v12M.5 4.500h12M.5 8.500h12" stroke="#fff" /></Svg></ViewButton>
          <ViewButton aria-label="Layout di pagina"><Svg w={14} h={13}><path d="M.5.5h13v12H.5zM3.500 2.500h7v8h-7zM5 4.500h4M5 6.500h4M5 8.500h4" stroke="#555" /></Svg></ViewButton>
          <ViewButton aria-label="Interruzioni"><Svg w={14} h={13}><path d="M.5.5h13v12H.5zM4.500.5v7M8.500.5v7h-8" stroke="#555" /></Svg></ViewButton>
          <ZoomButton aria-label="Riduci zoom"><Svg w={9} h={9}><path d="M0 4.500h9" stroke="#555" strokeWidth="2" /></Svg></ZoomButton>
          <ZoomSlider type="range" aria-label="Zoom" defaultValue={50} />
          <ZoomButton aria-label="Aumenta zoom"><Svg w={9} h={9}><path d="M4.500 0v9M0 4.500h9" stroke="#555" strokeWidth="2" /></Svg></ZoomButton>
          <ZoomValue>100%</ZoomValue>
        </StatusTools>
      </StatusBar>
      <DesktopEdge />
    </Window>
  );
}
